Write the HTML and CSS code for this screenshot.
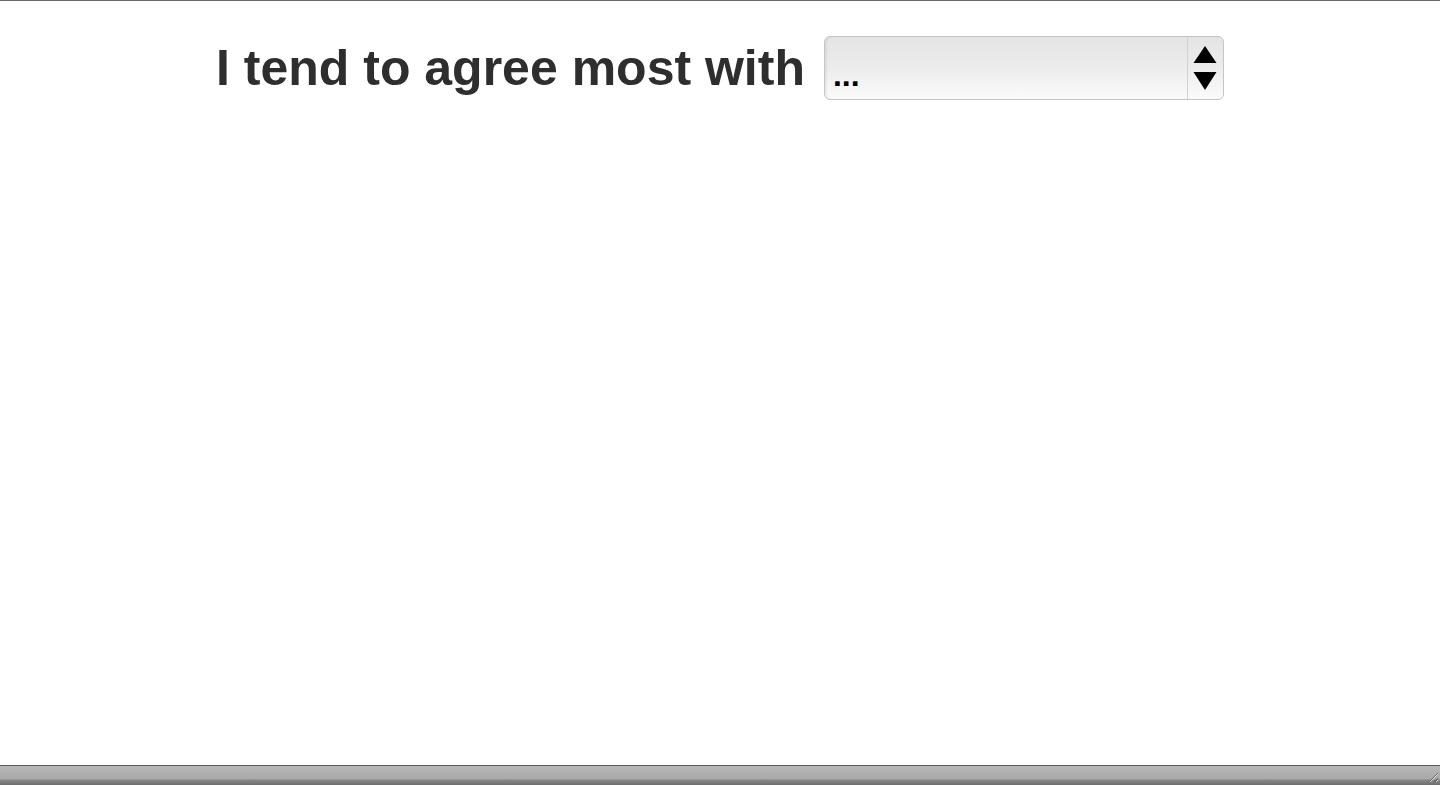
FILE: index.html
```html
<!DOCTYPE html>
<html lang="en">
<head>
<meta charset="utf-8">
<title>Agree</title>
<link rel="stylesheet" href="styles.css">
</head>
<body>
<div class="topline"></div>
<main class="content">
  <div class="prompt">
    <span class="label">I tend to agree most with</span>
    <div class="picker">
      <span class="picker-value">...</span>
      <span class="picker-arrows">
        <svg width="24" height="46" viewBox="0 0 24 46" aria-hidden="true">
          <polygon points="12,0 23.5,17 0.5,17" fill="#000"/>
          <polygon points="0.5,26 23.5,26 12,44" fill="#000"/>
        </svg>
      </span>
    </div>
  </div>
</main>
<footer class="statusbar">
  <span class="grip"></span>
</footer>
</body>
</html>
```

FILE: styles.css
```css
html, body {
  margin: 0;
  padding: 0;
  background: #ffffff;
}
body {
  width: 1440px;
  height: 785px;
  display: flex;
  flex-direction: column;
  overflow: hidden;
  font-family: "Liberation Sans", Arial, Helvetica, sans-serif;
}
.topline {
  height: 1px;
  background: #6a6a6a;
  flex: none;
}
.content {
  flex: 1;
  display: flex;
  justify-content: center;
  align-items: flex-start;
  padding-top: 35px;
}
.prompt {
  display: flex;
  align-items: center;
  gap: 19px;
}
.label {
  font-size: 50px;
  font-weight: bold;
  color: #2e2e2e;
  line-height: 64px;
  letter-spacing: 0;
}
.picker {
  width: 398px;
  height: 62px;
  border: 1px solid #c6c6c6;
  border-radius: 6px;
  background: linear-gradient(to bottom, #e4e4e4 0%, #ececec 50%, #fbfbfb 100%);
  display: flex;
  align-items: stretch;
  box-shadow: inset 2px 0 2px rgba(0,0,0,0.06);
}
.picker-value {
  flex: 1;
  font-size: 32px;
  font-weight: bold;
  color: #000;
  padding-left: 8px;
  padding-top: 22px;
  line-height: 32px;
}
.picker-arrows {
  width: 35px;
  border-left: 1px solid #d2d2d2;
  display: flex;
  align-items: center;
  justify-content: center;
  padding-top: 2px;
}
.statusbar {
  flex: none;
  height: 20px;
  box-sizing: border-box;
  border-top: 1px solid #5a5a5a;
  background: linear-gradient(to bottom, #b8b8b8 0%, #a9a9a9 70%, #8a8a8a 72%, #6e6e6e 100%);
  position: relative;
}
.grip {
  position: absolute;
  right: 2px;
  bottom: 3px;
  width: 12px;
  height: 12px;
  background: repeating-linear-gradient(135deg, transparent 0 2px, #666 2px 3px, #e0e0e0 3px 4px);
  clip-path: polygon(100% 0, 100% 100%, 0 100%);
}
```
